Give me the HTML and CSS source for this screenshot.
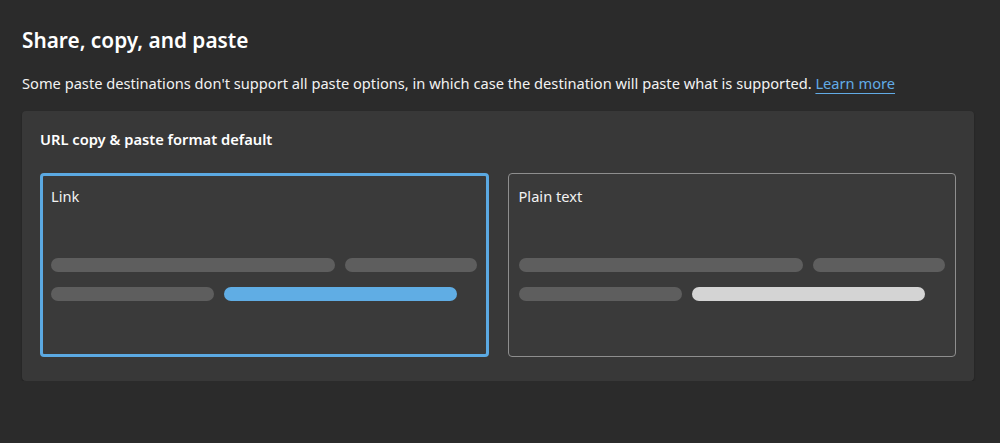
FILE: index.html
```html
<!DOCTYPE html>
<html lang="en">
<head>
    <meta charset="UTF-8">
    <meta name="viewport" content="width=device-width, initial-scale=1.0">
    <title>Share, copy, and paste</title>
    <link rel="stylesheet" href="styles.css">
</head>
<body>
    <div class="page">
        <h1>Share, copy, and paste</h1>
        <p class="desc">Some paste destinations don't support all paste options, in which case the destination will paste what is supported. <a href="#">Learn more</a></p>

        <div class="card">
            <h2>URL copy &amp; paste format default</h2>
            <div class="options">
                <div class="option selected">
                    <span class="option-label">Link</span>
                    <div class="preview">
                        <div class="row">
                            <span class="bar w284"></span>
                            <span class="bar w132"></span>
                        </div>
                        <div class="row">
                            <span class="bar w163"></span>
                            <span class="bar w233 accent"></span>
                        </div>
                    </div>
                </div>
                <div class="option">
                    <span class="option-label">Plain text</span>
                    <div class="preview">
                        <div class="row">
                            <span class="bar w284"></span>
                            <span class="bar w132"></span>
                        </div>
                        <div class="row">
                            <span class="bar w163"></span>
                            <span class="bar w233 light"></span>
                        </div>
                    </div>
                </div>
            </div>
        </div>
    </div>
</body>
</html>
```

FILE: styles.css
```css
body {
    margin: 0;
    background-color: #2b2b2b;
    color: #ffffff;
    font-family: "Noto Sans", "Open Sans", sans-serif;
}
.page {
    padding: 26px 26px 0 22px;
}
h1 {
    font-size: 20.8px;
    font-weight: 600;
    line-height: 28px;
    margin: 0;
}
.desc {
    font-size: 14.65px;
    line-height: 20px;
    margin: 19px 0 0 0;
    color: #f2f2f2;
}
.desc a {
    color: #62abe6;
    text-decoration: underline;
    text-underline-offset: 4px;
}
.card {
    margin-top: 18px;
    width: 952px;
    box-sizing: border-box;
    background-color: #383838;
    border-radius: 4px;
    padding: 18px 18px 24px 18px;
    box-shadow: 0 1px 2px rgba(0, 0, 0, 0.35);
}
h2 {
    font-size: 14.7px;
    font-weight: 600;
    line-height: 20px;
    margin: 0 0 24px 0;
}
.options {
    display: flex;
    gap: 19px;
}
.option {
    flex: 1;
    height: 184px;
    box-sizing: border-box;
    border: 1px solid #8e8e8e;
    border-radius: 4px;
    padding: 12px 10px 10px 10px;
    background-color: #3a3a3a;
}
.option.selected {
    border: 3px solid #5ba9e2;
    padding: 10px 8px 8px 8px;
}
.option-label {
    display: block;
    font-size: 14.65px;
    line-height: 20px;
    color: #f2f2f2;
}
.preview {
    margin-top: 52px;
    display: flex;
    flex-direction: column;
    gap: 15px;
}
.row {
    display: flex;
    gap: 10px;
}
.bar {
    height: 14px;
    border-radius: 7px;
    background-color: #5e5e5e;
}
.bar.accent {
    background-color: #60ade4;
}
.bar.light {
    background-color: #d4d4d4;
}
.w284 { width: 284px; }
.w132 { width: 132px; }
.w163 { width: 163px; }
.w233 { width: 233px; }
```
